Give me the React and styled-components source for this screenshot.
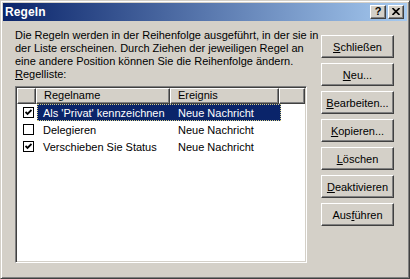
import React from "react";
import styled, { createGlobalStyle } from "styled-components";

const Global = createGlobalStyle`
  html, body { margin: 0; padding: 0; background: #d4d0c8; }
  body { font-family: "Liberation Sans", Arial, sans-serif; font-size: 11px; }
  * { box-sizing: border-box; }
`;

const Window = styled.div`
  width: 410px;
  height: 279px;
  background: #d4d0c8;
  border: 1px solid;
  border-color: #d4d0c8 #404040 #404040 #d4d0c8;
  box-shadow: inset 1px 1px #ffffff, inset -1px -1px #808080;
  padding: 2px;
  display: flex;
  flex-direction: column;
`;

const TitleBar = styled.div`
  height: 18px;
  flex: none;
  display: flex;
  align-items: center;
  padding: 0 3px 0 2px;
  background: linear-gradient(to right, #0a246a, #a6caf0);
`;

const Title = styled.div`
  flex: 1;
  color: #fff;
  font-weight: bold;
  font-size: 12px;
  letter-spacing: 0.1px;
`;

const CaptionButtons = styled.div`
  display: flex;
  gap: 2px;
`;

const CaptionButton = styled.div`
  width: 16px;
  height: 14px;
  background: #d4d0c8;
  border: 1px solid;
  border-color: #ffffff #404040 #404040 #ffffff;
  box-shadow: inset -1px -1px #808080;
  display: flex;
  align-items: center;
  justify-content: center;
  font-weight: bold;
  font-size: 11px;
  line-height: 1;
  color: #000;
  padding-bottom: 1px;
`;

const Body = styled.div`
  flex: 1;
  display: flex;
  padding: 8px 0 0 12px;
`;

const LeftCol = styled.div`
  width: 292px;
  display: flex;
  flex-direction: column;
`;

const Description = styled.p`
  margin: 0;
  line-height: 13px;
  white-space: nowrap;
  color: #000;
`;

const Label = styled.div`
  line-height: 13px;
  color: #000;
`;

const U = styled.span`
  text-decoration: underline;
  text-underline-offset: 1px;
`;

const ListBox = styled.div`
  margin-top: 5px;
  height: 177px;
  background: #fff;
  border: 1px solid;
  border-color: #808080 #ffffff #ffffff #808080;
  box-shadow: inset 1px 1px #404040, inset -1px -1px #d4d0c8;
  padding: 1px;
  display: flex;
  flex-direction: column;
`;

const Header = styled.div`
  display: grid;
  grid-template-columns: 19px 134px 109px 1fr;
  height: 16px;
  flex: none;
`;

const HeaderCell = styled.div`
  background: #d4d0c8;
  border: 1px solid;
  border-color: #ffffff #404040 #404040 #ffffff;
  box-shadow: inset -1px -1px #808080;
  padding-left: 7px;
  line-height: 13px;
  color: #000;
  white-space: nowrap;
  overflow: hidden;
`;

const Row = styled.div`
  display: flex;
  height: 17px;
  align-items: center;
`;

const CheckCell = styled.div`
  width: 20px;
  height: 100%;
  display: flex;
  align-items: center;
  padding-left: 6px;
`;

const Box = styled.div`
  width: 11px;
  height: 11px;
  border: 1px solid #000;
  background: #fff;
  display: flex;
  align-items: center;
  justify-content: center;
`;

const Item = styled.div`
  width: 244px;
  height: 100%;
  display: flex;
  align-items: center;
  background: ${(p) => (p.$selected ? "#0a246a" : "transparent")};
  color: ${(p) => (p.$selected ? "#ffffff" : "#000000")};
  outline: ${(p) => (p.$selected ? "1px dotted #d8d088" : "none")};
  outline-offset: -1px;
  white-space: nowrap;
`;

const NameCell = styled.div`
  width: 133px;
  padding-left: 6px;
`;

const EventCell = styled.div`
  padding-left: 8px;
`;

const ButtonCol = styled.div`
  margin-left: 14px;
  padding-top: 6px;
  display: flex;
  flex-direction: column;
  gap: 5px;
`;

const Button = styled.div`
  width: 73px;
  height: 23px;
  background: #d4d0c8;
  border: 1px solid;
  border-color: #ffffff #404040 #404040 #ffffff;
  box-shadow: inset -1px -1px #808080;
  display: flex;
  align-items: center;
  justify-content: center;
  color: #000;
  white-space: nowrap;
`;

const Check = () => (
  <svg width="7" height="7" viewBox="0 0 7 7">
    <path d="M0.5 3 L2.5 5 L6.5 1" fill="none" stroke="#000" strokeWidth="1.8" />
  </svg>
);

const CloseGlyph = () => (
  <svg width="8" height="7" viewBox="0 0 8 7">
    <path d="M0.5 0 L7.5 7 M7.5 0 L0.5 7" stroke="#000" strokeWidth="1.6" />
  </svg>
);

const rules = [
  { name: "Als 'Privat' kennzeichnen", event: "Neue Nachricht", checked: true, selected: true },
  { name: "Delegieren", event: "Neue Nachricht", checked: false },
  { name: "Verschieben Sie Status", event: "Neue Nachricht", checked: true },
];

const buttons = [
  ["S", "chließen"],
  ["N", "eu..."],
  ["B", "earbeiten..."],
  ["K", "opieren..."],
  ["L", "öschen"],
  ["D", "eaktivieren"],
];

export default function App() {
  return (
    <>
      <Global />
      <Window>
        <TitleBar>
          <Title>Regeln</Title>
          <CaptionButtons>
            <CaptionButton>?</CaptionButton>
            <CaptionButton>
              <CloseGlyph />
            </CaptionButton>
          </CaptionButtons>
        </TitleBar>
        <Body>
          <LeftCol>
            <Description>
              Die Regeln werden in der Reihenfolge ausgeführt, in der sie in
              <br />
              der Liste erscheinen. Durch Ziehen der jeweiligen Regel an
              <br />
              eine andere Position können Sie die Reihenfolge ändern.
            </Description>
            <Label>
              <U>R</U>egelliste:
            </Label>
            <ListBox>
              <Header>
                <HeaderCell />
                <HeaderCell>Regelname</HeaderCell>
                <HeaderCell>Ereignis</HeaderCell>
                <HeaderCell />
              </Header>
              {rules.map((r) => (
                <Row key={r.name}>
                  <CheckCell>
                    <Box>{r.checked && <Check />}</Box>
                  </CheckCell>
                  <Item $selected={r.selected}>
                    <NameCell>{r.name}</NameCell>
                    <EventCell>{r.event}</EventCell>
                  </Item>
                </Row>
              ))}
            </ListBox>
          </LeftCol>
          <ButtonCol>
            {buttons.map(([k, rest]) => (
              <Button key={k}>
                <span>
                  <U>{k}</U>
                  {rest}
                </span>
              </Button>
            ))}
            <Button>
              <span>
                Aus<U>f</U>ühren
              </span>
            </Button>
          </ButtonCol>
        </Body>
      </Window>
    </>
  );
}
